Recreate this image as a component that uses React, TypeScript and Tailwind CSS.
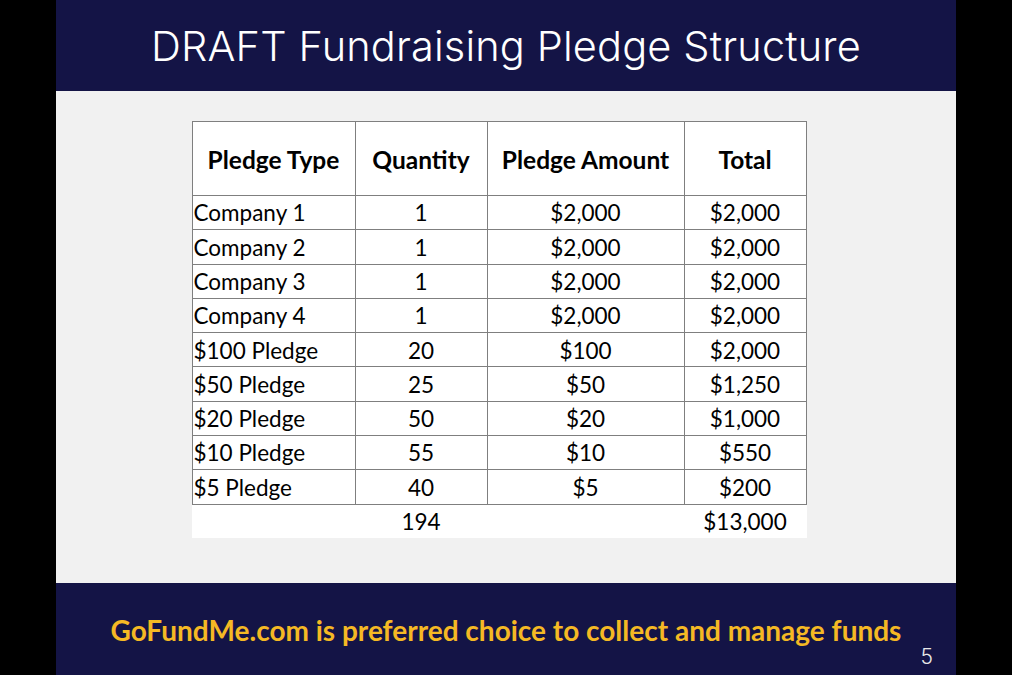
const rows = [
  ['Company 1', '1', '$2,000', '$2,000'],
  ['Company 2', '1', '$2,000', '$2,000'],
  ['Company 3', '1', '$2,000', '$2,000'],
  ['Company 4', '1', '$2,000', '$2,000'],
  ['$100 Pledge', '20', '$100', '$2,000'],
  ['$50 Pledge', '25', '$50', '$1,250'],
  ['$20 Pledge', '50', '$20', '$1,000'],
  ['$10 Pledge', '55', '$10', '$550'],
  ['$5 Pledge', '40', '$5', '$200'],
]

export default function App() {
  return (
    <div className="w-[1012px] h-[675px] bg-black flex justify-center">
      <div className="w-[900px] h-full flex flex-col">
        {/* Title bar */}
        <header className="h-[91px] bg-[#141446] flex items-center justify-center pt-[2px]">
          <h1 className="text-white text-[41.5px] tracking-[0.15px] font-light font-['Inter',sans-serif]">
            DRAFT Fundraising Pledge Structure
          </h1>
        </header>

        {/* Table area */}
        <main className="flex-1 bg-[#f1f1f1] flex justify-center pt-[30px] pr-[14px]">
          <table className="h-fit border-collapse bg-white text-black text-[22.5px] font-['Lato',sans-serif]">
            <thead>
              <tr className="h-[74px] text-[24.5px]">
                <th className="w-[163px] border border-[#7f7f7f] font-bold pt-[3px]">Pledge Type</th>
                <th className="w-[132px] border border-[#7f7f7f] font-bold pt-[3px]">Quantity</th>
                <th className="w-[197px] border border-[#7f7f7f] font-bold pt-[3px]">Pledge Amount</th>
                <th className="w-[122px] border border-[#7f7f7f] font-bold pt-[3px]">Total</th>
              </tr>
            </thead>
            <tbody>
              {rows.map((r) => (
                <tr key={r[0]} className="h-[34.3px] leading-none">
                  <td className="border border-[#7f7f7f] pl-[1px] pt-[2px]">{r[0]}</td>
                  <td className="border border-[#7f7f7f] text-center pt-[2px]">{r[1]}</td>
                  <td className="border border-[#7f7f7f] text-center pt-[2px]">{r[2]}</td>
                  <td className="border border-[#7f7f7f] text-center pt-[2px]">{r[3]}</td>
                </tr>
              ))}
              <tr className="h-[34px] leading-none">
                <td></td>
                <td className="text-center pt-[2px]">194</td>
                <td></td>
                <td className="text-center pt-[2px]">$13,000</td>
              </tr>
            </tbody>
          </table>
        </main>

        {/* Footer bar */}
        <footer className="h-[92px] bg-[#141446] relative flex items-center justify-center pt-[2px]">
          <p className="text-[#f5b924] text-[28px] font-bold font-['Lato',sans-serif]">
            GoFundMe.com is preferred choice to collect and manage funds
          </p>
          <span className="absolute right-[23px] bottom-[3px] text-[#e8e8e8] text-[21px] font-light font-['Inter',sans-serif]">
            5
          </span>
        </footer>
      </div>
    </div>
  )
}
